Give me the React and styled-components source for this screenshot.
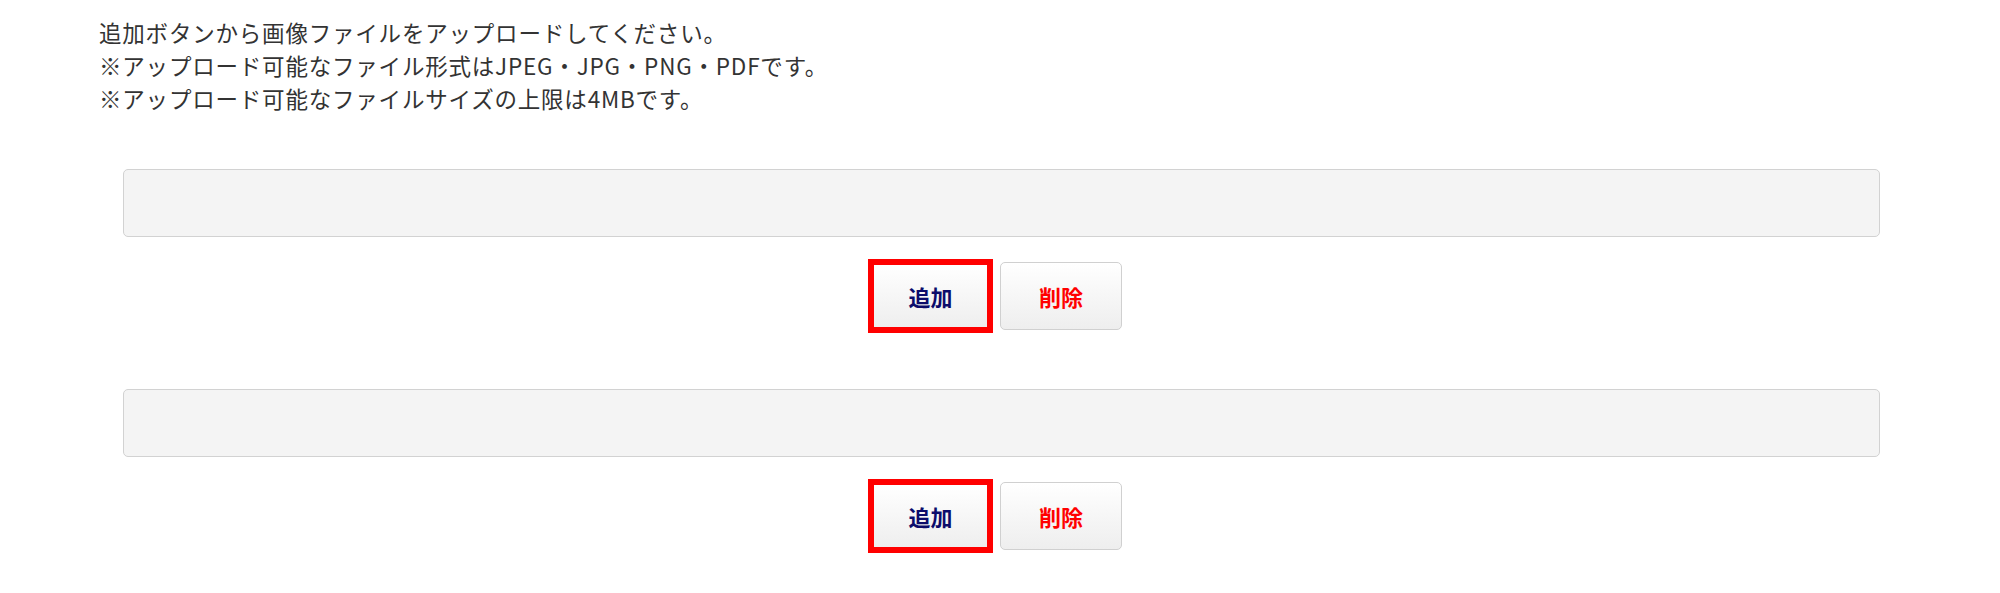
import styled, { createGlobalStyle } from "styled-components";

const GlobalStyle = createGlobalStyle`
  body {
    margin: 0;
    background: #fff;
    font-family: "Noto Sans CJK JP", "Noto Sans", sans-serif;
  }
`;

const notes = [
  "追加ボタンから画像ファイルをアップロードしてください。",
  "※アップロード可能なファイル形式はJPEG・JPG・PNG・PDFです。",
  "※アップロード可能なファイルサイズの上限は4MBです。",
];

const Page = styled.div`
  padding: 16px 120px 0 0;
`;

const Notes = styled.div`
  padding-left: 99px;
  color: #333;
  font-size: 22.5px;
  letter-spacing: 0.8px;
  line-height: 33px;
  margin-bottom: 54px;
`;

const UploadBlock = styled.div`
  display: flex;
  flex-direction: column;
  align-items: stretch;
  gap: 22px;
  margin-left: 123px;
  & + & {
    margin-top: 56px;
  }
`;

const FileBox = styled.div`
  box-sizing: border-box;
  height: 68px;
  background: #f4f4f4;
  border: 1px solid #d2d2d2;
  border-radius: 5px;
`;

const ButtonRow = styled.div`
  display: flex;
  justify-content: center;
  align-items: center;
  gap: 7px;
  padding-right: 13px;
`;

const Button = styled.button`
  box-sizing: border-box;
  width: ${(p) => (p.$primary ? "125px" : "122px")};
  height: ${(p) => (p.$primary ? "74px" : "68px")};
  border: ${(p) => (p.$primary ? "6px solid #f00" : "1px solid #d0d0d0")};
  border-radius: ${(p) => (p.$primary ? "0" : "5px")};
  background: linear-gradient(to bottom, #ffffff, #eeeeee);
  color: ${(p) => (p.$primary ? "#0d0d6b" : "#f00")};
  font-family: "Noto Sans CJK JP", sans-serif;
  font-weight: bold;
  font-size: 22px;
  padding: 0;
  cursor: pointer;
`;

export default function App() {
  return (
    <Page>
      <GlobalStyle />
      <Notes>
        {notes.map((n, i) => (
          <div key={i}>{n}</div>
        ))}
      </Notes>
      {[0, 1].map((i) => (
        <UploadBlock key={i}>
          <FileBox />
          <ButtonRow>
            <Button $primary>追加</Button>
            <Button>削除</Button>
          </ButtonRow>
        </UploadBlock>
      ))}
    </Page>
  );
}
